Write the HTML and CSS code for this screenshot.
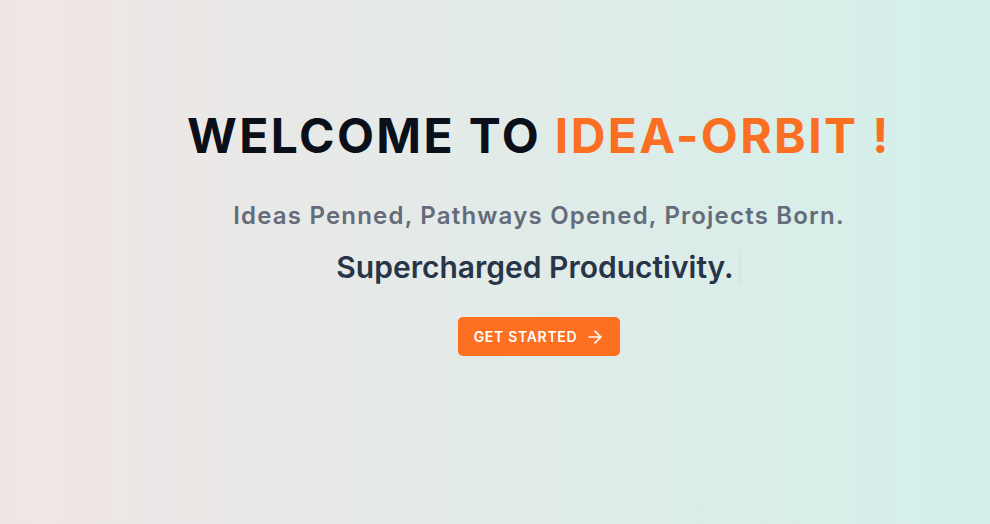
FILE: index.html
```html
<!DOCTYPE html>
<html>
<head>
<meta charset="utf-8">
<link rel="stylesheet" href="styles.css">
</head>
<body>
<main class="hero">
  <div class="content">
    <h1 class="title">WELCOME TO <span class="accent">IDEA-ORBIT !</span></h1>
    <p class="tagline">Ideas Penned, Pathways Opened, Projects Born.</p>
    <p class="typed">Supercharged Productivity.<span class="cursor"></span></p>
    <button class="cta">GET STARTED
      <svg class="arrow" width="20" height="20" viewBox="0 0 24 24" fill="none" stroke="currentColor" stroke-width="2" stroke-linecap="round" stroke-linejoin="round"><path d="M5 12h14"/><path d="M12 5l7 7-7 7"/></svg>
    </button>
  </div>
</main>
</body>
</html>
```

FILE: styles.css
```css
html, body {
  margin: 0;
  padding: 0;
}
body {
  font-family: Inter, "Noto Sans", sans-serif;
}
.hero {
  width: 990px;
  height: 524px;
  background: linear-gradient(to right, #f1e6e6, #d3f0ea);
  display: flex;
  justify-content: center;
  padding-left: 88px;
  box-sizing: border-box;
}
.content {
  display: flex;
  flex-direction: column;
  align-items: center;
  padding-top: 108px;
}
.title {
  margin: 0;
  font-size: 48px;
  font-weight: 700;
  letter-spacing: 0.05em;
  color: #0b0f19;
  line-height: 56px;
  white-space: nowrap;
}
.accent {
  color: #fb6f23;
}
.tagline {
  margin: 36px 0 0;
  font-size: 24px;
  font-weight: 600;
  letter-spacing: 0.05em;
  color: #646b7a;
  line-height: 32px;
  white-space: nowrap;
}
.typed {
  margin: 17px 0 0;
  font-size: 30px;
  font-weight: 600;
  color: #283548;
  line-height: 36px;
  display: flex;
  align-items: center;
  white-space: nowrap;
}
.cursor {
  display: inline-block;
  width: 3px;
  height: 35px;
  margin-left: 5px;
  background: #d6e8e3;
}
.cta {
  margin-top: 32px;
  display: flex;
  align-items: center;
  gap: 8px;
  background: #fd7022;
  color: #fff;
  border: none;
  border-radius: 5px;
  height: 39px;
  padding: 0 15px 0 16px;
  font-family: Inter, sans-serif;
  font-size: 14px;
  font-weight: 600;
  letter-spacing: 0.05em;
}
.arrow {
  display: block;
}
```
